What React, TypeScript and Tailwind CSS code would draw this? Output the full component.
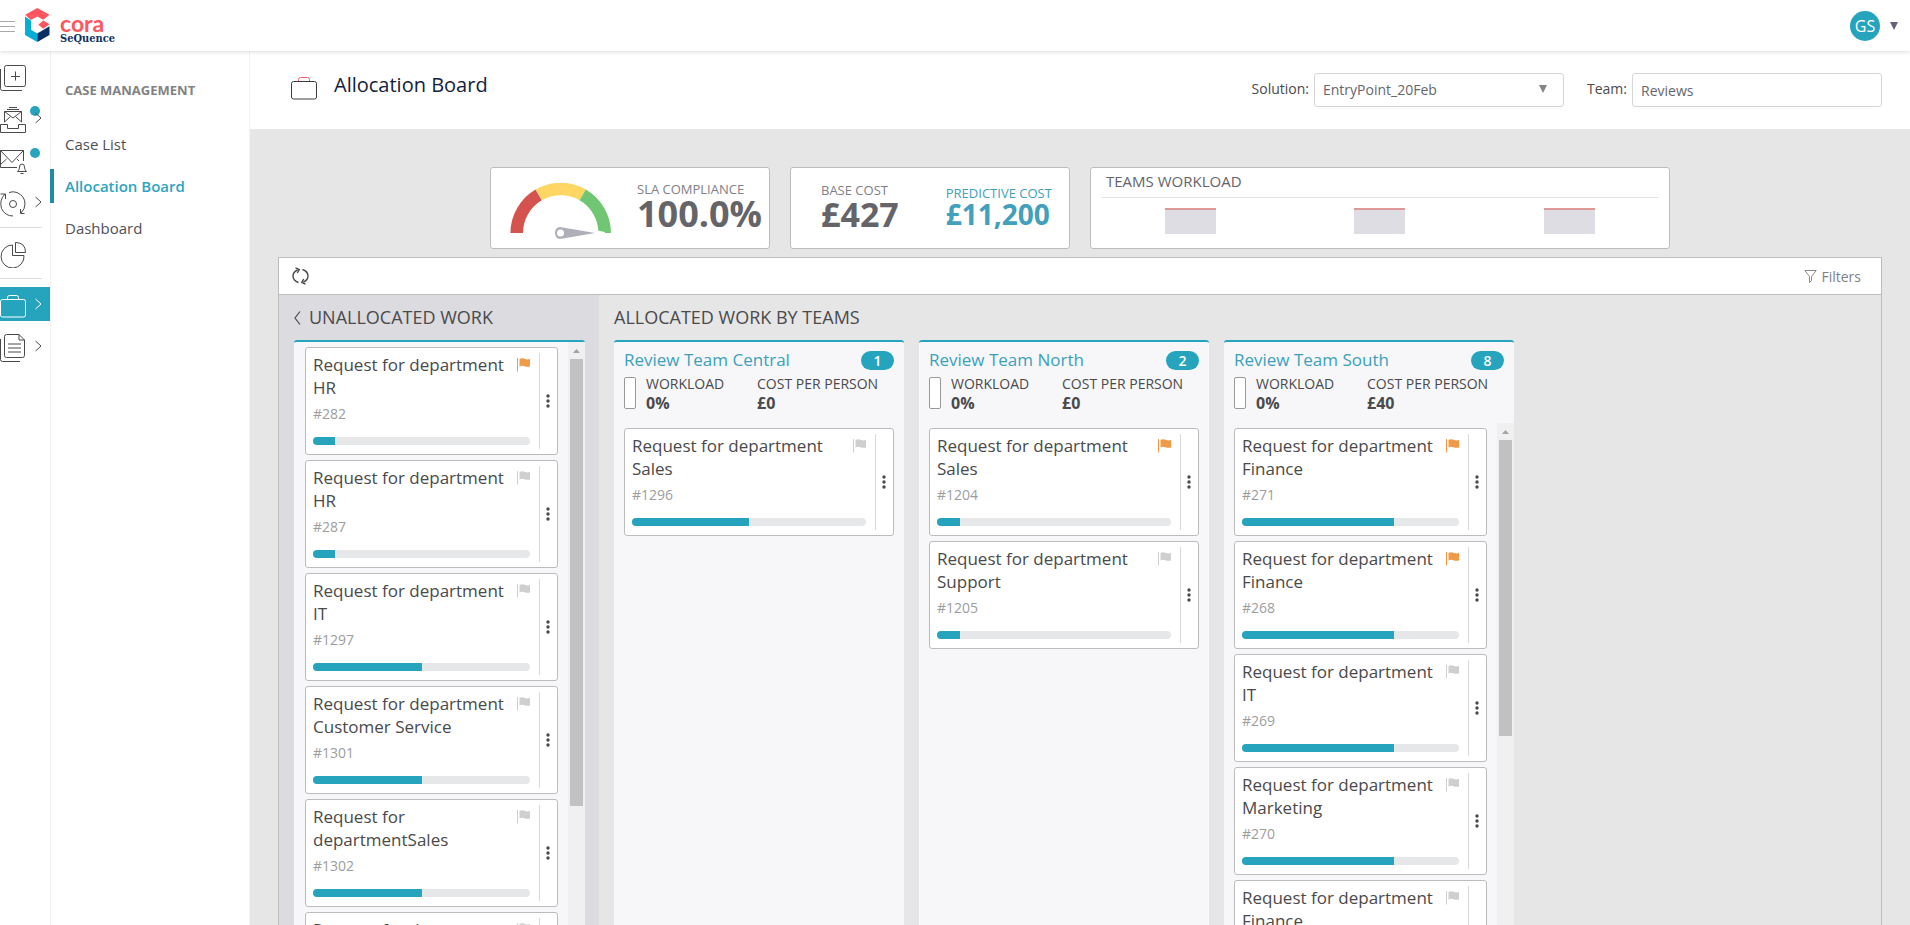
import React from "react";

type CaseItem = { title: string; id: string; progress: number; flagged?: boolean };
type Team = { name: string; count: number; workload: string; cost: string; items: CaseItem[]; scroll?: boolean };

const unallocated: CaseItem[] = [
  { title: "Request for department HR", id: "#282", progress: 10, flagged: true },
  { title: "Request for department HR", id: "#287", progress: 10 },
  { title: "Request for department IT", id: "#1297", progress: 50 },
  { title: "Request for department Customer Service", id: "#1301", progress: 50 },
  { title: "Request for departmentSales", id: "#1302", progress: 50 },
  { title: "Request for department Sales", id: "#1303", progress: 50 },
];

const teams: Team[] = [
  {
    name: "Review Team Central",
    count: 1,
    workload: "0%",
    cost: "£0",
    items: [{ title: "Request for department Sales", id: "#1296", progress: 50 }],
  },
  {
    name: "Review Team North",
    count: 2,
    workload: "0%",
    cost: "£0",
    items: [
      { title: "Request for department Sales", id: "#1204", progress: 10, flagged: true },
      { title: "Request for department Support", id: "#1205", progress: 10 },
    ],
  },
  {
    name: "Review Team South",
    count: 8,
    workload: "0%",
    cost: "£40",
    scroll: true,
    items: [
      { title: "Request for department Finance", id: "#271", progress: 70, flagged: true },
      { title: "Request for department Finance", id: "#268", progress: 70, flagged: true },
      { title: "Request for department IT", id: "#269", progress: 70 },
      { title: "Request for department Marketing", id: "#270", progress: 70 },
      { title: "Request for department Finance", id: "#272", progress: 70 },
    ],
  },
];

function Logo() {
  return (
    <a href="#home" className="flex items-start gap-[10px]">
      <svg width="25" height="34" viewBox="0 0 25 34" aria-hidden="true">
        <path d="M0.2 6.800 L12.300 0 L24.500 6.800 L18.300 11.800 L12.300 8.500 L5.800 12 Z" fill="#ff555f" />
        <path d="M18.300 12.500 L24.500 16.300 L18.300 20.800 L13.300 16.800 Z" fill="#ff555f" />
        <path d="M0 8.500 L6 12.500 V21.800 L12.300 25.500 V34 L0 27 Z" fill="#06aed5" />
        <path d="M24.500 18.200 V27 L12.300 34 V25.500 Z" fill="#0b2f63" />
      </svg>
      <span className="flex flex-col pt-[5px]">
        <span className="font-['Lato'] text-[23px] leading-[20px] font-bold text-[#ff555f]">cora</span>
        <span className="font-['DejaVu_Serif_Condensed','DejaVu_Serif',serif] text-[11px] leading-[12px] font-bold text-[#12305f]">
          SeQuence
        </span>
      </span>
    </a>
  );
}

function Svg({ children, h = 26, className = "" }: { children: React.ReactNode; h?: number; className?: string }) {
  return (
    <svg
      width="27"
      height={h}
      viewBox={`0 0 27 ${h}`}
      fill="none"
      stroke="currentColor"
      strokeLinejoin="round"
      className={className}
      aria-hidden="true"
    >
      {children}
    </svg>
  );
}

const AddIcon = () => (
  <Svg>
    <rect x="4.5" y="0.5" width="21" height="21" rx="2" />
    <path d="M15.5 6.5v9M11 11.5h9M0.5 4v19.500q0 2 2 2H22" />
  </Svg>
);
const InboxIcon = () => (
  <Svg>
    <path d="M9 0.500h8M7 2.500h12" />
    <path d="M4.500 15V4.500h17V15M4.500 4.500L13 11l8.500-6.500M4.500 15l6-5.500M21.500 15l-6-5.500" />
    <path d="M0.500 17.500h7v4h11v-4h7v8h-25z" />
  </Svg>
);
const MailIcon = () => (
  <Svg>
    <path d="M17 18.500H0.500V1.500h23V12M0.500 1.500L12 13.500l11.500-12M0.500 15.500l6-5.500M17 10l2 2" />
    <path d="M17.500 22.500q2-1.500 2-4.500 0-3 2.500-3t2.500 3q0 3 2 4.500zM20.500 24.500h3" />
  </Svg>
);
const CycleIcon = () => (
  <Svg>
    <circle cx="13" cy="13" r="3.500" />
    <path d="M9 1.500q4-1.500 8 0Q25 5 25 13q0 5-4 9M13 25Q5 25 1.500 17.500-1 9 5 3M0.500 3h5v5M20.500 18v4.500h4" />
  </Svg>
);
const PieIcon = () => (
  <Svg>
    <path d="M12.500 3A11.500 11.500 0 1 0 24 13.500H12.500z" />
    <path d="M15.500 0.500V10.500H25.500Q25.500 0.500 15.500 0.500z" />
  </Svg>
);
const CaseIcon = ({ handle = "currentColor" }: { handle?: string }) => (
  <Svg h={23}>
    <path d="M7.500 4.500V2.500q0-2 2-2h7q2 0 2 2v2" stroke={handle} />
    <rect x="0.500" y="4.500" width="25" height="17.500" rx="2" />
  </Svg>
);
const DocIcon = () => (
  <Svg h={28}>
    <path d="M19 0.500H6.500q-2 0-2 2v19q0 2 2 2h16q2 0 2-2V6zM19 0.500V6h5.500M8 10h13M8 14h13M8 18h13" />
    <path d="M0.500 5v20.500q0 2 2 2H20" />
  </Svg>
);

function Chevron({ left = false, className = "" }: { left?: boolean; className?: string }) {
  return left ? (
    <svg width="7" height="14" viewBox="0 0 7 14" fill="none" stroke="#4a4a4a" className={className} aria-hidden="true">
      <path d="M6 0.500L1 7l5 6.500" strokeWidth="1.200" />
    </svg>
  ) : (
    <svg width="7" height="12" viewBox="0 0 7 12" fill="none" stroke="currentColor" className={className} aria-hidden="true">
      <path d="M0.500 1L6 6l-5.500 5" />
    </svg>
  );
}

function RailItem({
  label,
  icon,
  arrow,
  dot,
  active,
}: {
  label: string;
  icon: React.ReactNode;
  arrow?: boolean;
  dot?: boolean;
  active?: boolean;
}) {
  return (
    <button
      aria-label={label}
      className={`relative flex h-[34px] w-full items-center justify-between pr-2 ${
        active ? "bg-[#26a4be] text-white" : "text-[#4a4a4a]"
      }`}
    >
      <span className="pt-1">{icon}</span>
      {dot && <span className="absolute top-[5px] left-[30px] size-[10px] rounded-full bg-[#26a4be]" />}
      {arrow && <Chevron className="relative" />}
    </button>
  );
}

function Rail() {
  return (
    <nav aria-label="Main" className="flex w-[50px] shrink-0 flex-col gap-2 bg-white pt-2">
      <RailItem label="New case" icon={<AddIcon />} />
      <RailItem label="Inbox" icon={<InboxIcon />} arrow dot />
      <RailItem label="Notifications" icon={<MailIcon />} dot />
      <RailItem label="Processes" icon={<CycleIcon />} arrow />
      <hr className="w-[42px] border-[#dedede]" />
      <RailItem label="Reports" icon={<PieIcon />} />
      <hr className="w-[42px] border-[#dedede]" />
      <RailItem label="Case management" icon={<CaseIcon />} arrow active />
      <RailItem label="Documents" icon={<DocIcon />} arrow />
    </nav>
  );
}

function SubMenu() {
  return (
    <nav
      aria-label="Case management"
      className="flex w-[200px] shrink-0 flex-col gap-2 border-r border-[#f2f2f2] bg-white pt-[22px] text-[15px] text-[#4e5058] shadow-[inset_1px_0_0_#f2f2f2]"
    >
      <h2 className="mb-3 pl-[15px] text-[13px] leading-[34px] font-bold text-[#828282]">CASE MANAGEMENT</h2>
      <a href="#cases" className="pl-[15px] leading-[34px]">Case List</a>
      <a
        href="#board"
        aria-current="page"
        className="border-l-4 border-[#1f8ca3] pl-[11px] leading-[34px] font-semibold text-[#2ea5bd]"
      >
        Allocation Board
      </a>
      <a href="#dashboard" className="pl-[15px] leading-[34px]">Dashboard</a>
    </nav>
  );
}

function Triangle({ color }: { color: string }) {
  return (
    <svg width="8" height="8" viewBox="0 0 8 8" aria-hidden="true" className="shrink-0">
      <path d="M0 0h8L4 8z" fill={color} />
    </svg>
  );
}

function Gauge() {
  return (
    <svg width="102" height="58" viewBox="0 0 102 58" aria-hidden="true">
      <g fill="none" strokeWidth="12.500">
        <path d="M6.700 50A44 44 0 0 1 28.700 11.900" stroke="#d4534f" />
        <path d="M28.700 11.900A44 44 0 0 1 72.700 11.900" stroke="#fdd663" />
        <path d="M72.700 11.900A44 44 0 0 1 94.700 50" stroke="#70c673" />
      </g>
      <path d="M87 47.500l8 1.500v1.500h-8z" fill="#fff" />
      <path d="M50 44L85 50 50 56Q45 55.500 45 50T50 44z" fill="#adb0b9" />
      <circle cx="50.500" cy="50" r="3.500" fill="#fff" />
    </svg>
  );
}

const tile = "h-[82px] rounded-[3px] border border-[#bdbdbd] bg-white";

function Metrics() {
  return (
    <section aria-label="Metrics" className="flex justify-center gap-5">
      <div className={`${tile} flex w-[280px] pt-[15px] pl-[19px]`}>
        <Gauge />
        <div className="-mt-1 pl-[25px]">
          <div className="text-[13px] leading-[20px] text-[#808088]">SLA COMPLIANCE</div>
          <div className="text-[36px] leading-[30px] font-bold text-[#646469]">100.0%</div>
        </div>
      </div>
      <div className={`${tile} flex w-[280px] items-start gap-[47px] pt-3 pl-[30px]`}>
        <div>
          <div className="text-[13px] leading-[20px] text-[#808088]">BASE COST</div>
          <div className="text-[34px] leading-[28px] font-bold text-[#646469]">£427</div>
        </div>
        <div className="pt-[3px] text-[#42a0bc]">
          <div className="text-[13px] leading-[20px]">PREDICTIVE COST</div>
          <div className="text-[28px] leading-[22px] font-bold">£11,200</div>
        </div>
      </div>
      <div className={`${tile} w-[580px] px-[10px]`}>
        <h2 className="border-b border-[#e3e3e3] pb-[2px] pl-[5px] text-[15px] leading-[27px] text-[#646469]">
          TEAMS WORKLOAD
        </h2>
        <div className="-mx-[5px] grid grid-cols-3 justify-items-center pt-[10px]">
          {[0, 1, 2].map((n) => (
            <div key={n} className="h-[26px] w-[51px] border-t-2 border-[#dd9898] bg-[#dedde3]" />
          ))}
        </div>
      </div>
    </section>
  );
}

function CaseCard({ item }: { item: CaseItem }) {
  return (
    <article className="flex h-[108px] shrink-0 rounded-[3px] border border-[#bcbcbc] bg-white py-[5px]">
      <div className="flex flex-1 flex-col pr-[9px] pl-[7px]">
        <div className="flex items-start justify-between">
          <h3 className="w-[194px] text-[17px] leading-[23px] text-[#4a4a4a]">{item.title}</h3>
          <svg
            width="13"
            height="14"
            viewBox="0 0 13 14"
            className={`mt-[5px] shrink-0 ${item.flagged ? "text-[#f09a47]" : "text-[#cfcfcf]"}`}
            aria-hidden="true"
          >
            <path d="M0.500 0v13.500" stroke="currentColor" />
            <path d="M2.500 1Q5 -0.300 7.500 0.800T13 1V8.500Q10 9.300 7.500 8.200T2.500 8.500z" fill="currentColor" />
          </svg>
        </div>
        <div className="pt-[5px] text-[14px] leading-[20px] text-[#9d9d9d]">{item.id}</div>
        <div className="mt-[13px] h-2 overflow-hidden rounded-full bg-[#e6e7e9]">
          <div className="h-full bg-[#26a4be]" style={{ width: `${item.progress}%` }} />
        </div>
      </div>
      <button
        aria-label={`Actions for ${item.id}`}
        className="flex w-[18px] items-center justify-center border-l border-[#dadada] pr-[2px]"
      >
        <svg width="4" height="14" viewBox="0 0 4 14" fill="#4a4a4a" aria-hidden="true">
          <circle cx="2" cy="2" r="1.700" />
          <circle cx="2" cy="7" r="1.700" />
          <circle cx="2" cy="12" r="1.700" />
        </svg>
      </button>
    </article>
  );
}

function ScrollTrack({ tall = false }: { tall?: boolean }) {
  return (
    <div aria-hidden="true" className="flex w-[17px] shrink-0 flex-col items-center bg-[#f0f0f0]">
      <svg width="17" height="17" viewBox="0 0 17 17" className="shrink-0">
        <path d="M5 11h7L8.500 7z" fill="#a3a3a3" />
      </svg>
      <div className={`w-[13px] shrink-0 bg-[#c1c1c1] ${tall ? "h-[447px]" : "h-[296px]"}`} />
    </div>
  );
}

function TeamColumn({ team }: { team: Team }) {
  return (
    <section className="flex w-[290px] flex-col rounded-t-[3px] border-t-2 border-[#26a4be] bg-[#f7f7fa]">
      <header className="h-[81px] px-[10px] pt-2">
        <div className="flex items-center justify-between">
          <h3 className="text-[17px] leading-[20px] text-[#3ba1bb]">{team.name}</h3>
          <span className="h-[19px] w-[33px] rounded-full bg-[#26a4be] text-center text-[14px] leading-[19px] font-semibold text-white">
            {team.count}
          </span>
        </div>
        <div className="flex pt-[5px] text-[#4a4a4a]">
          <span className="mt-[2px] h-8 w-3 rounded-[2px] border border-[#999] bg-white" />
          <div className="w-[121px] pl-[10px]">
            <div className="text-[14px] leading-[18px]">WORKLOAD</div>
            <div className="text-[16px] leading-[20px] font-bold">{team.workload}</div>
          </div>
          <div>
            <div className="text-[14px] leading-[18px]">COST PER PERSON</div>
            <div className="text-[16px] leading-[20px] font-bold">{team.cost}</div>
          </div>
        </div>
      </header>
      <div className="flex min-h-0 flex-1">
        <div className="flex flex-1 flex-col gap-[5px] overflow-hidden px-[10px] pt-[5px]">
          {team.items.map((item) => (
            <CaseCard key={item.id} item={item} />
          ))}
        </div>
        {team.scroll && <ScrollTrack />}
      </div>
    </section>
  );
}

function Board() {
  return (
    <section aria-label="Board" className="mt-2 flex min-h-0 flex-1 flex-col border border-b-0 border-[#bdbdbd]">
      <div className="flex h-[37px] shrink-0 items-center justify-between border-b border-[#bdbdbd] bg-white pr-5 pl-[13px]">
        <button aria-label="Refresh">
          <svg width="17" height="18" viewBox="0 0 17 18" fill="none" stroke="#4a4a4a" strokeWidth="1.400" aria-hidden="true">
            <path d="M6.500 15.500Q1 13.500 1 9q0-4 4.500-6M3.500 0.800L7.300 2.500 5.300 6M10.500 2.500Q16 4.500 16 9q0 4-4.500 6M13.500 17.200L9.700 15.500 11.700 12" />
          </svg>
        </button>
        <button className="flex items-center gap-1 text-[14px] text-[#808088]">
          <svg width="13" height="13" viewBox="0 0 13 13" fill="none" stroke="#8a8a8a" aria-hidden="true">
            <path d="M0.800 0.500h11.400L7.500 6.500v4l-2 2v-6z" />
          </svg>
          Filters
        </button>
      </div>
      <div className="flex min-h-0 flex-1 text-[#4a4a4a]">
        <section className="flex w-[320px] flex-col bg-[#dcdbe0] pr-[14px] pl-[15px]">
          <h2 className="flex h-[45px] shrink-0 items-center gap-2 text-[18px]">
            <Chevron left />
            UNALLOCATED WORK
          </h2>
          <div className="flex min-h-0 flex-1 rounded-t-[3px] border-t-2 border-[#26a4be] bg-[#f7f7fa]">
            <div className="flex flex-1 flex-col gap-[5px] overflow-hidden pt-[5px] pr-[10px] pl-[11px]">
              {unallocated.map((item) => (
                <CaseCard key={item.id} item={item} />
              ))}
            </div>
            <ScrollTrack tall />
          </div>
        </section>
        <section className="flex min-w-0 flex-1 flex-col pl-[15px]">
          <h2 className="flex h-[45px] shrink-0 items-center text-[18px]">ALLOCATED WORK BY TEAMS</h2>
          <div className="flex min-h-0 flex-1 gap-[15px]">
            {teams.map((team) => (
              <TeamColumn key={team.name} team={team} />
            ))}
          </div>
        </section>
      </div>
    </section>
  );
}

export default function App() {
  return (
    <div className="flex h-screen flex-col overflow-hidden bg-white font-['Open_Sans',sans-serif]">
      <header className="relative z-10 flex h-[51px] shrink-0 items-start justify-between bg-white pr-3 shadow-[0_1px_4px_rgba(0,0,0,0.14)]">
        <div className="flex gap-[10px] pt-2">
          <button aria-label="Toggle menu" className="flex w-[15px] flex-col gap-1 pt-[13px]">
            <span className="h-px w-full bg-[#a9a9a9]" />
            <span className="h-px w-full bg-[#a9a9a9]" />
            <span className="h-px w-full bg-[#a9a9a9]" />
          </button>
          <Logo />
        </div>
        <button aria-label="Account" className="flex items-center gap-[10px] pt-[11px]">
          <span className="size-[30px] rounded-full bg-[#26a4be] text-center text-[16px] leading-[30px] text-white">GS</span>
          <Triangle color="#62627a" />
        </button>
      </header>
      <div className="flex min-h-0 flex-1">
        <Rail />
        <SubMenu />
        <main className="flex min-w-0 flex-1 flex-col bg-[#e6e6e6]">
          <header className="flex h-[78px] shrink-0 justify-between bg-white px-7">
            <div className="flex items-start gap-4 pt-[20px] pl-[13px] text-[#3c3c3c]">
              <span className="pt-[6px]">
                <CaseIcon handle="#f0646c" />
              </span>
              <h1 className="text-[20px] leading-[28px] text-[#14213d]">Allocation Board</h1>
            </div>
            <div className="flex items-start gap-[23px] pt-[22px] text-[14px] leading-[32px] text-[#4a4a4a]">
              <div className="flex gap-[5px]">
                <label htmlFor="solution">Solution:</label>
                <div className="relative">
                  <select
                    id="solution"
                    className="h-[34px] w-[250px] appearance-none rounded-[3px] border border-[#d6d6d6] bg-white pl-2 text-[#66666c]"
                  >
                    <option>EntryPoint_20Feb</option>
                  </select>
                  <span className="pointer-events-none absolute top-3 right-[17px] flex">
                    <Triangle color="#858585" />
                  </span>
                </div>
              </div>
              <div className="flex gap-[5px]">
                <label htmlFor="team">Team:</label>
                <input
                  id="team"
                  defaultValue="Reviews"
                  className="h-[34px] w-[250px] rounded-[3px] border border-[#d6d6d6] bg-white px-2 text-[#66666c]"
                />
              </div>
            </div>
          </header>
          <div className="flex min-h-0 flex-1 flex-col px-7 pt-[38px]">
            <Metrics />
            <Board />
          </div>
        </main>
      </div>
    </div>
  );
}
